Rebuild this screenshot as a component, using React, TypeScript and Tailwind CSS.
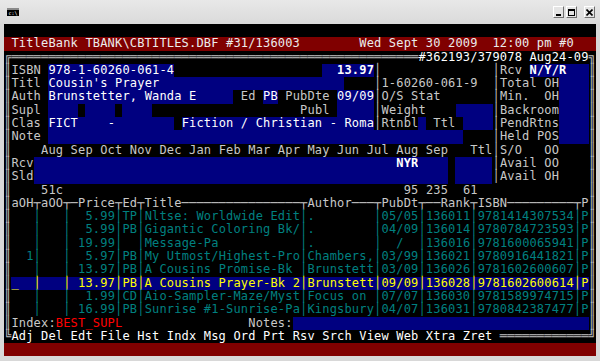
import React from "react";

type Style =
  | "k"
  | "lbl"
  | "val"
  | "valB"
  | "red"
  | "teal"
  | "sel"
  | "idx"
  | "menu";

type Cell = { c: string; s: Style };

const CLS: Record<Style, string> = {
  k: "text-[#c0c0c0]",
  lbl: "text-[#c8c8c8]",
  val: "bg-[#000080] text-white",
  valB: "bg-[#000080] text-white font-bold",
  red: "bg-[#800000] text-[#ececec]",
  teal: "text-[#008080]",
  sel: "bg-[#000080] text-[#ffff00]",
  idx: "text-[#ff0000]",
  menu: "text-white",
};

const COLS = 80;
const ROWS = 25;

// table rows: aOH, aOO, price, ed, title, author, pubdt, rank, isbn
const titles: string[][] = [
  ["", "", "5.99", "TP", "Nltse: Worldwide Edit", ".", "05/05", "136011", "9781414307534"],
  ["", "", "5.99", "PB", "Gigantic Coloring Bk/", ".", "04/09", "136014", "9780784723593"],
  ["", "", "19.99", "", "Message-Pa", ".", "  /", "136016", "9781600065941"],
  ["1", "", "5.97", "PB", "My Utmost/Highest-Pro", "Chambers,", "03/99", "136021", "9780916441821"],
  ["", "", "13.97", "PB", "A Cousins Promise-Bk", "Brunstett", "03/09", "136026", "9781602600607"],
  ["_", "", "13.97", "PB", "A Cousins Prayer-Bk 2", "Brunstett", "09/09", "136028", "9781602600614"],
  ["", "", "1.99", "CD", "Aio-Sampler-Maze/Myst", "Focus on", "07/07", "136030", "9781589974715"],
  ["", "", "16.99", "PB", "Sunrise #1-Sunrise-Pa", "Kingsbury", "04/07", "136031", "9780842387477"],
];

function buildScreen() {
  const rows: Cell[][] = Array.from({ length: ROWS }, () =>
    Array.from({ length: COLS }, () => ({ c: " ", s: "k" as Style }))
  );
  const put = (r: number, col: number, t: string, s: Style = "lbl") => {
    [...t].forEach((ch, i) => {
      rows[r][col + i] = { c: ch, s };
    });
  };
  const fill = (r: number, a: number, b: number, s: Style) => {
    for (let i = a; i <= b; i++) rows[r][i] = { c: rows[r][i].c, s };
  };

  // title band
  fill(1, 0, 79, "red");
  put(1, 1, "TitleBank TBANK\\CBTITLES.DBF #31/136003", "red");
  put(1, 48, "Wed Sept 30 2009  12:00 pm #0", "red");

  // outer frame
  put(2, 0, "╔" + "═".repeat(55), "k");
  put(2, 56, "#362193/379078 Aug24-09", "menu");
  put(2, 79, "╗", "k");
  for (let r = 3; r <= 22; r++) {
    put(r, 0, "║", "k");
    put(r, 79, "║", "k");
  }
  for (let r = 3; r <= 7; r++) put(r, 50, "│", "k");
  for (let r = 3; r <= 11; r++) put(r, 66, "│", "k");

  // form
  put(3, 1, "ISBN");
  fill(3, 6, 22, "val");
  put(3, 6, "978-1-60260-061-4", "val");
  fill(3, 43, 49, "val");
  put(3, 45, "13.97", "valB");
  put(3, 67, "Rcv");
  fill(3, 71, 78, "val");
  put(3, 71, "N/Y/R", "valB");

  put(4, 1, "Titl");
  fill(4, 6, 45, "val");
  put(4, 6, "Cousin's Prayer", "val");
  put(4, 51, "1-60260-061-9");
  put(4, 67, "Total OH");
  fill(4, 75, 78, "val");

  put(5, 1, "Auth");
  fill(5, 6, 30, "val");
  put(5, 6, "Brunstetter, Wanda E", "val");
  put(5, 32, "Ed");
  put(5, 35, "PB", "val");
  put(5, 38, "PubDte");
  put(5, 45, "09/09", "val");
  put(5, 51, "O/S Stat");
  put(5, 67, "Min.  OH");
  fill(5, 75, 78, "val");

  put(6, 1, "Supl");
  fill(6, 6, 9, "val");
  fill(6, 11, 14, "val");
  fill(6, 16, 19, "val");
  put(6, 40, "Publ");
  fill(6, 45, 49, "val");
  put(6, 51, "Weight");
  fill(6, 61, 65, "val");
  put(6, 67, "Backroom");
  fill(6, 75, 78, "val");

  put(7, 1, "Clas");
  fill(7, 6, 22, "val");
  put(7, 6, "FICT", "val");
  put(7, 14, "-", "val");
  put(7, 24, "Fiction / Christian - Roma", "val");
  put(7, 51, "Rtnbl");
  fill(7, 56, 56, "val");
  put(7, 58, "Ttl");
  fill(7, 62, 65, "val");
  put(7, 67, "PendRtns");
  fill(7, 75, 78, "val");

  put(8, 1, "Note");
  fill(8, 6, 61, "val");
  put(8, 67, "Held POS");
  fill(8, 75, 78, "val");

  put(9, 5, "Aug Sep Oct Nov Dec Jan Feb Mar Apr May Jun Jul Aug Sep");
  put(9, 63, "Ttl");
  put(9, 67, "S/O   OO");

  put(10, 1, "Rcv");
  fill(10, 4, 59, "val");
  put(10, 53, "NYR", "valB");
  fill(10, 61, 65, "val");
  put(10, 67, "Avail OO");

  put(11, 1, "Sld");
  fill(11, 4, 59, "val");
  fill(11, 61, 65, "val");
  put(11, 67, "Avail OH");

  put(12, 5, "51c");
  put(12, 54, "95");
  put(12, 57, "235");
  put(12, 62, "61");

  // table header
  put(13, 1, "aOH┬aOO┬─Price┬Ed┬Title" + "─".repeat(16) + "┬Author───┬PubDt┬──Rank┬ISBN" + "─".repeat(9) + "┬P");

  const seps = [4, 8, 15, 18, 40, 50, 56, 63, 77];
  const right = (t: string, n: number) => t.padStart(n, " ");
  titles.forEach((t, i) => {
    const r = 14 + i;
    const s: Style = i === 5 ? "sel" : "teal";
    if (i === 5) fill(r, 1, 78, "sel");
    seps.forEach((c) => put(r, c, "│", s));
    put(r, 1, t[0] === "_" ? "_" : right(t[0], 3), s);
    put(r, 5, right(t[1], 3), s);
    put(r, 10, right(t[2], 5), s);
    put(r, 16, t[3], s);
    put(r, 19, t[4], s);
    put(r, 41, t[5], s);
    put(r, 51, t[6], s);
    put(r, 57, t[7], s);
    put(r, 64, t[8], s);
    put(r, 78, "P", s);
  });

  put(22, 1, "Index:");
  put(22, 7, "BEST_SUPL", "idx");
  put(22, 33, "Notes:");
  fill(22, 39, 78, "val");

  put(23, 0, "╚", "k");
  put(23, 1, "Adj Del Edt File Hst Indx Msg Ord Prt Rsv Srch View Web Xtra Zret", "menu");
  put(23, 67, "═".repeat(12) + "╝", "k");

  fill(24, 0, 79, "red");
  return rows;
}

function ScreenRow({ cells }: { cells: Cell[] }) {
  const groups: { t: string; s: Style }[] = [];
  cells.forEach((cell) => {
    const last = groups[groups.length - 1];
    if (last && last.s === cell.s) last.t += cell.c;
    else groups.push({ t: cell.c, s: cell.s });
  });
  return (
    <div className="flex h-[13.3px] leading-[13.3px] whitespace-pre">
      {groups.map((g, i) => (
        <span key={i} className={`h-full ${CLS[g.s]}`}>
          {g.t}
        </span>
      ))}
    </div>
  );
}

function TitleButton({ children }: { children: React.ReactNode }) {
  return (
    <div className="w-[11px] h-[12px] flex items-center justify-center bg-[#e4e4e4] border border-t-white border-l-white border-r-[#707070] border-b-[#707070]">
      {children}
    </div>
  );
}

export default function App() {
  const screen = buildScreen();
  return (
    <div className="w-[600px] h-[361px] bg-[#d8d8d8] overflow-hidden font-['DejaVu_Sans_Mono',monospace]">
      <div className="h-[24px] flex items-center justify-between pl-[7px] pr-[5px] bg-gradient-to-b from-[#e8e8e8] to-[#dadada]">
        <div className="w-[12px] h-[8px] bg-black border-t-2 border-[#8a8a8a] flex items-center justify-center">
          <span className="text-[5px] leading-none text-white">c:\</span>
        </div>
        <div className="flex items-center gap-[2px]">
          <TitleButton>
            <svg width="7" height="7" viewBox="0 0 7 7">
              <rect x="1" y="5" width="5" height="2" fill="#000" />
            </svg>
          </TitleButton>
          <TitleButton>
            <svg width="7" height="7" viewBox="0 0 7 7">
              <rect x="0.5" y="0.5" width="6" height="6" fill="none" stroke="#000" />
              <rect x="0" y="0" width="7" height="2" fill="#000" />
            </svg>
          </TitleButton>
          <div className="w-[3px]" />
          <TitleButton>
            <svg width="7" height="7" viewBox="0 0 7 7">
              <path d="M0.5 0.5 L6.5 6.5 M6.5 0.5 L0.5 6.5" stroke="#000" strokeWidth="1.6" />
            </svg>
          </TitleButton>
        </div>
      </div>
      <div className="ml-[4px] w-[592px] bg-black text-[12px] tracking-[0.176px]">
        {screen.map((cells, i) => (
          <ScreenRow key={i} cells={cells} />
        ))}
      </div>
    </div>
  );
}
